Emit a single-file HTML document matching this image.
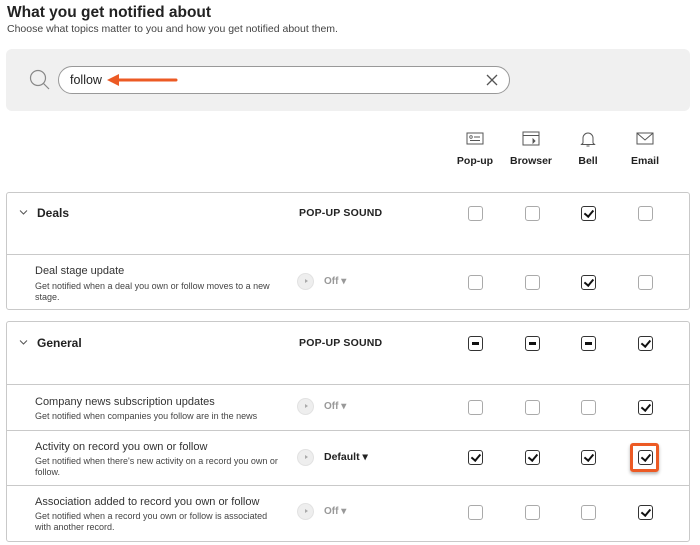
<!DOCTYPE html>
<html><head><meta charset="utf-8"><style>
*{box-sizing:border-box;margin:0;padding:0}
body{width:700px;height:545px;background:#fff;font-family:"Liberation Sans",sans-serif;color:#222;position:relative;overflow:hidden}
.a{position:absolute}
.box{position:absolute;left:6px;width:684px;border:1px solid #c9c9c9;border-radius:3px}
.hl{position:absolute;left:0;right:0;border-top:1px solid #c9c9c9}
.cb{position:absolute;width:15px;height:15px;border:1px solid #aaa;border-radius:3px;background:#fff}
.cb.k{border:1.5px solid #333}
.cb.k::after{content:"";position:absolute;left:4px;top:1px;width:3.5px;height:7px;border:solid #111;border-width:0 2px 2px 0;transform:rotate(40deg)}
.cb.m{border:1.5px solid #333}
.cb.m::after{content:"";position:absolute;left:2.5px;top:5px;width:7px;height:2.5px;background:#111}
.sec{font-size:12px;font-weight:bold;color:#222}
.ps{font-size:10.5px;font-weight:bold;letter-spacing:.2px}
.t{font-size:11px;color:#333}
.d{font-size:9px;color:#444;line-height:10.5px;width:245px}
.pl{position:absolute;width:17px;height:17px;border-radius:50%;background:#eee;border:1px solid #e2e2e2}
.pl::after{content:"";position:absolute;left:7px;top:5px;border-left:3px solid #aaa;border-top:2.5px solid transparent;border-bottom:2.5px solid transparent}
.off{font-size:10px;color:#999;font-weight:bold}
.col{font-size:10.5px;font-weight:bold;text-align:center;width:60px}
</style></head><body>
<div class="a" style="left:7px;top:4px;font-size:15.5px;font-weight:bold;color:#222">What you get notified about</div>
<div class="a" style="left:7px;top:23px;font-size:10.5px;color:#444">Choose what topics matter to you and how you get notified about them.</div>
<div class="a" style="left:6px;top:49px;width:684px;height:62px;background:#f0f0f0;border-radius:6px"></div>
<svg class="a" style="left:28px;top:68px" width="24" height="24"><circle cx="10" cy="10" r="7.5" fill="none" stroke="#888" stroke-width="1.2"/><line x1="15.5" y1="15.5" x2="21" y2="21" stroke="#888" stroke-width="1.2"/></svg>
<div class="a" style="left:58px;top:66px;width:452px;height:28px;background:#fff;border:1px solid #999;border-radius:14px"></div>
<div class="a" style="left:70px;top:73px;font-size:12.5px;color:#222">follow</div>
<svg class="a" style="left:104px;top:72px" width="76" height="16"><line x1="12" y1="8" x2="72" y2="8" stroke="#ec5a24" stroke-width="3" stroke-linecap="round"/><path d="M3 8 L15 2 L15 14 Z" fill="#ec5a24"/></svg>
<svg class="a" style="left:486px;top:74px" width="12" height="12"><path d="M1 1L11 11M11 1L1 11" stroke="#555" stroke-width="1.3"/></svg>
<svg class="a" style="left:466px;top:132px" width="18" height="14"><rect x="1" y="1" width="16" height="11" fill="none" stroke="#555" stroke-width="1"/><circle cx="5" cy="5" r="1.3" fill="none" stroke="#555" stroke-width=".8"/><path d="M8 5h6M4 8.5h10" stroke="#555" stroke-width=".9"/></svg>
<svg class="a" style="left:522px;top:131px" width="18" height="16"><rect x="1" y="1" width="16" height="13" fill="none" stroke="#555" stroke-width="1"/><path d="M1 4.5h16M11 8v4l2-2z" stroke="#555" stroke-width=".9" fill="#555"/></svg>
<svg class="a" style="left:580px;top:130px" width="16" height="18"><path d="M3 13V8a5 5 0 0 1 10 0v5l1.5 1.5h-13z M6.5 16h3" fill="none" stroke="#555" stroke-width="1"/></svg>
<svg class="a" style="left:636px;top:132px" width="18" height="14"><rect x="1" y="1" width="16" height="11" fill="none" stroke="#555" stroke-width="1"/><path d="M1.5 1.5L9 8l7.5-6.5" fill="none" stroke="#555" stroke-width="1"/></svg>
<div class="a col" style="left:445px;top:155px">Pop-up</div>
<div class="a col" style="left:501px;top:155px">Browser</div>
<div class="a col" style="left:558px;top:155px">Bell</div>
<div class="a col" style="left:615px;top:155px">Email</div>

<div class="box" style="top:192px;height:118px"><div class="hl" style="top:61px"></div></div>
<svg class="a" style="left:19px;top:209px" width="9" height="7"><path d="M1 1.5l3.5 3.5 3.5-3.5" fill="none" stroke="#555" stroke-width="1"/></svg>
<div class="a sec" style="left:37px;top:206px">Deals</div>
<div class="a ps" style="left:299px;top:207px">POP-UP SOUND</div>
<div class="cb" style="left:468px;top:206px"></div><div class="cb" style="left:525px;top:206px"></div><div class="cb k" style="left:581px;top:206px"></div><div class="cb" style="left:638px;top:206px"></div>
<div class="a t" style="left:35px;top:265px">Deal stage update</div>
<div class="a d" style="left:35px;top:281px">Get notified when a deal you own or follow moves to a new stage.</div>
<div class="pl" style="left:297px;top:273px"></div><div class="a off" style="left:324px;top:276px">Off ▾</div>
<div class="cb" style="left:468px;top:275px"></div><div class="cb" style="left:525px;top:275px"></div><div class="cb k" style="left:581px;top:275px"></div><div class="cb" style="left:638px;top:275px"></div>

<div class="box" style="top:321px;height:221px"><div class="hl" style="top:62px"></div><div class="hl" style="top:108px"></div><div class="hl" style="top:163px"></div></div>
<svg class="a" style="left:19px;top:339px" width="9" height="7"><path d="M1 1.5l3.5 3.5 3.5-3.5" fill="none" stroke="#555" stroke-width="1"/></svg>
<div class="a sec" style="left:37px;top:336px">General</div>
<div class="a ps" style="left:299px;top:337px">POP-UP SOUND</div>
<div class="cb m" style="left:468px;top:336px"></div><div class="cb m" style="left:525px;top:336px"></div><div class="cb m" style="left:581px;top:336px"></div><div class="cb k" style="left:638px;top:336px"></div>

<div class="a t" style="left:35px;top:396px">Company news subscription updates</div>
<div class="a d" style="left:35px;top:411px;width:300px">Get notified when companies you follow are in the news</div>
<div class="pl" style="left:297px;top:398px"></div><div class="a off" style="left:324px;top:401px">Off ▾</div>
<div class="cb" style="left:468px;top:400px"></div><div class="cb" style="left:525px;top:400px"></div><div class="cb" style="left:581px;top:400px"></div><div class="cb k" style="left:638px;top:400px"></div>

<div class="a t" style="left:35px;top:441px">Activity on record you own or follow</div>
<div class="a d" style="left:35px;top:456px">Get notified when there's new activity on a record you own or follow.</div>
<div class="pl" style="left:297px;top:449px"></div><div class="a" style="left:324px;top:451px;font-size:10.5px;font-weight:bold;color:#222">Default ▾</div>
<div class="cb k" style="left:468px;top:450px"></div><div class="cb k" style="left:525px;top:450px"></div><div class="cb k" style="left:581px;top:450px"></div>
<div class="a" style="left:630px;top:443px;width:29px;height:29px;border:3px solid #ec5a24;border-radius:3px;box-shadow:0 2px 3px rgba(0,0,0,.3)"></div>
<div class="cb k" style="left:638px;top:450px"></div>

<div class="a t" style="left:35px;top:496px">Association added to record you own or follow</div>
<div class="a d" style="left:35px;top:511px">Get notified when a record you own or follow is associated with another record.</div>
<div class="pl" style="left:297px;top:503px"></div><div class="a off" style="left:324px;top:506px">Off ▾</div>
<div class="cb" style="left:468px;top:505px"></div><div class="cb" style="left:525px;top:505px"></div><div class="cb" style="left:581px;top:505px"></div><div class="cb k" style="left:638px;top:505px"></div>
</body></html>
